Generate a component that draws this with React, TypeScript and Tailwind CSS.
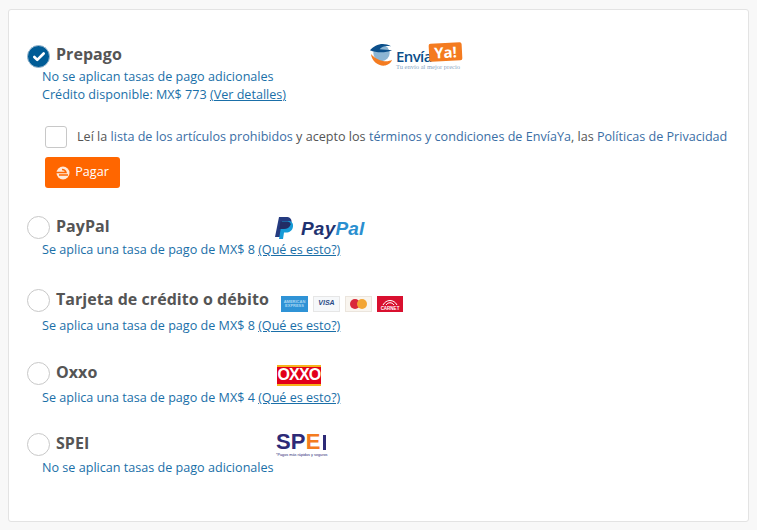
import { Check } from "lucide-react";
import type { ReactNode } from "react";

function Radio({ checked }: { checked?: boolean }) {
  if (checked) {
    return (
      <span className="flex h-[23px] w-[23px] shrink-0 items-center justify-center rounded-full border border-[#9ab8cf] bg-[#005c96]">
        <Check className="h-[14px] w-[14px] text-white" strokeWidth={4.5} />
      </span>
    );
  }
  return <span className="h-[23px] w-[23px] shrink-0 rounded-full border border-[#c8c8c8] bg-white" />;
}

function WhatIsThis() {
  return <a className="underline">(Qué es esto?)</a>;
}

function EnviaYaLogo() {
  return (
    <div className="relative -mt-[3px] flex h-[26px] w-[94px] items-start">
      <svg width="25" height="25" viewBox="0 0 26 25" className="shrink-0">
        <circle cx="13" cy="11" r="8.500" fill="#8db6d4" />
        <path d="M2 12c1 8 8 13 15 12 4-1 6-3 7-6-5 3-15 2-22-6z" fill="#f47b20" />
        <path d="M1 8c5-6 14-9 22-4-6-1-9 0-12 3 4 0 9 1 13 1-7 3-16 3-23 0z" fill="#0b4f8a" />
      </svg>
      <span className="ml-[2px] mt-[6px] w-[33px] text-[15px] leading-[16px] font-semibold tracking-[-0.6px] text-[#0b4f8a]">
        Envía
      </span>
      <span className="mt-[1px] flex h-[18px] w-[33px] -rotate-3 items-center justify-center rounded-[2px] bg-[#f47b20] text-[15px] leading-none font-bold text-white">
        Ya!
      </span>
      <span className="absolute top-[22px] left-[27px] font-['Liberation_Serif',serif] text-[6.500px] leading-[6px] whitespace-nowrap text-[#8aa6c4]">
        Tu envío al mejor precio
      </span>
    </div>
  );
}

function PayPalLogo() {
  return (
    <div className="flex items-center">
      <svg width="19" height="22" viewBox="0 0 19 22">
        <path d="M4 0h7c4 0 6 2 5.500 5.500C16 10 13 12 9 12H6.500L5.500 20H0z" fill="#253b80" />
        <path d="M7 4h6c3.500 0 5.500 2 5 5.500-.5 4-3.500 6-7 6H9l-1 6.500H4z" fill="#169bd7" />
        <path d="M5.500 4.500 4.200 12H9c3 0 5.500-1.500 6.800-4.800C15 5 13.500 4.500 11 4.500z" fill="#222d65" />
      </svg>
      <span className="ml-[7px] mt-[3px] font-['Liberation_Sans',sans-serif] text-[19px] leading-[22px] font-bold tracking-[0.2px] italic text-[#1f3270]">
        Pay<span className="text-[#2a8fd0]">Pal</span>
      </span>
    </div>
  );
}

function CardLogos() {
  return (
    <div className="mt-[6px] flex items-center gap-[5px] font-['Liberation_Sans',sans-serif]">
      <div className="flex h-[16px] w-[27px] items-center justify-center bg-[#2f93d6] text-center text-[4px] leading-[4px] font-bold text-[#a9d6f2]">
        AMERICAN
        <br />
        EXPRESS
      </div>
      <div className="flex h-[16px] w-[27px] items-center justify-center border border-[#e6e6e6] bg-[#f6f8fa] text-[7px] font-bold italic text-[#2a4a86]">
        VISA
      </div>
      <div className="relative flex h-[16px] w-[27px] items-center justify-center border border-[#ebe5dd] bg-[#f9f5ef]">
        <span className="h-[10px] w-[10px] rounded-full bg-[#d9283a]" />
        <span className="-ml-[3px] h-[10px] w-[10px] rounded-full bg-[#f3a533]" />
      </div>
      <div className="flex h-[16px] w-[26px] flex-col items-center justify-end bg-[#d9102f] pb-[1px]">
        <svg width="16" height="7" viewBox="0 0 16 7" fill="none" stroke="#fff" strokeWidth="1">
          <path d="M1 6c3-6 11-6 14 0M4 6c2-3 6-3 8 0" />
        </svg>
        <span className="text-[4.500px] leading-[5px] font-bold text-white">CARNET</span>
      </div>
    </div>
  );
}

function OxxoLogo() {
  return (
    <div className="mt-[3px] flex h-[21px] w-[44px] items-center bg-[#f6b31b]">
      <div className="flex h-[17px] w-full items-center justify-center bg-[#e2001a] font-['Liberation_Sans',sans-serif] text-[16px] leading-none font-bold tracking-[-0.8px] text-white">
        OXXO
      </div>
    </div>
  );
}

function SpeiLogo() {
  return (
    <div className="mt-[2px] flex w-[50px] flex-col font-['Liberation_Sans',sans-serif]">
      <div className="flex h-[17px] items-center text-[22px] leading-none font-bold tracking-[0.2px] text-[#2d2a77]">
        SP<span className="text-[#f47b20]">E</span>
        <span className="ml-[2px] h-[15px] w-[4px] bg-[#2d2a77]" />
      </div>
      <span className="mt-[2px] text-[3.800px] leading-[5px] whitespace-nowrap text-[#2d2a77]">
        *Pagos más rápidos y seguros
      </span>
    </div>
  );
}

function Method({
  title,
  checked,
  logo,
  titleClass,
  className,
  descClass,
  children,
}: {
  title: string;
  checked?: boolean;
  logo: ReactNode;
  titleClass: string;
  className: string;
  descClass: string;
  children: ReactNode;
}) {
  return (
    <div className={className}>
      <div className="flex h-[23px] items-center">
        <Radio checked={checked} />
        <div className={`ml-[6px] -mt-[4px] shrink-0 text-[16px] leading-[22px] font-bold tracking-[0.05px] text-[#555] ${titleClass}`}>
          {title}
        </div>
        {logo}
      </div>
      <div className={`ml-[15px] text-[12.600px] leading-[18px] text-[#1a6fa8] ${descClass}`}>{children}</div>
    </div>
  );
}

export default function App() {
  return (
    <div className="min-h-[530px] bg-[#f8f8f8] px-[8px] pt-[9px] pb-[8px] font-['Open_Sans',sans-serif]">
      <div className="h-[513px] rounded-[3px] border border-[#e3e3e3] bg-white pt-[35px] pl-[18px]">
        <Method title="Prepago" checked titleClass="w-[313px] pb-[2px]" className="" descClass="" logo={<EnviaYaLogo />}>
          <p>No se aplican tasas de pago adicionales</p>
          <p>
            Crédito disponible: MX$ 773 <a className="underline">(Ver detalles)</a>
          </p>
        </Method>

        <div className="mt-[22px] ml-[18px]">
          <label className="flex items-center">
            <span className="h-[22px] w-[22px] shrink-0 rounded-[3px] border border-[#c8c8c8] bg-white" />
            <span className="ml-[10px] text-[12.600px] whitespace-nowrap text-[#555]">
              Leí la <a className="text-[#3a6ea5]">lista de los artículos prohibidos</a> y acepto los{" "}
              <a className="text-[#3a6ea5]">términos y condiciones de EnvíaYa</a>, las{" "}
              <a className="text-[#3a6ea5]">Políticas de Privacidad</a>
            </span>
          </label>
          <button className="mt-[9px] flex h-[31px] w-[75px] items-center justify-center gap-[5px] rounded-[3px] bg-[#ff6600] text-[12.600px] text-white">
            <svg width="14" height="14" viewBox="0 0 14 14">
              <circle cx="7" cy="7" r="6.500" fill="#fff" opacity="0.85" />
              <path d="M0 6.500h10c-.5-2-2-3-4-3M3 9h9" stroke="#ff6600" strokeWidth="1.500" fill="none" />
            </svg>
            Pagar
          </button>
        </div>

        <Method title="PayPal" titleClass="w-[219px]" className="mt-[28px]" descClass="mt-[2px]" logo={<PayPalLogo />}>
          Se aplica una tasa de pago de MX$ 8 <WhatIsThis />
        </Method>

        <Method title="Tarjeta de crédito o débito" titleClass="w-[225px]" className="mt-[30px]" descClass="mt-[5px]" logo={<CardLogos />}>
          Se aplica una tasa de pago de MX$ 8 <WhatIsThis />
        </Method>

        <Method title="Oxxo" titleClass="w-[221px]" className="mt-[27px]" descClass="mt-[4px]" logo={<OxxoLogo />}>
          Se aplica una tasa de pago de MX$ 4 <WhatIsThis />
        </Method>

        <Method title="SPEI" titleClass="w-[220px]" className="mt-[26px]" descClass="mt-[3px]" logo={<SpeiLogo />}>
          No se aplican tasas de pago adicionales
        </Method>
      </div>
    </div>
  );
}
